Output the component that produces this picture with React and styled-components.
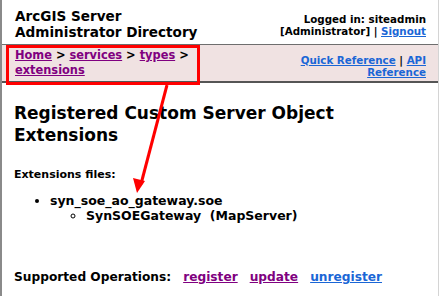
import React from "react";
import styled, { createGlobalStyle } from "styled-components";

const Global = createGlobalStyle`
  html, body { margin: 0; padding: 0; background: #fff; }
  body { font-family: "DejaVu Sans", Verdana, sans-serif; font-weight: bold; color: #000; }
`;

const Page = styled.div`
  position: relative;
  width: 439px;
  height: 296px;
  box-sizing: border-box;
  border-left: 2px solid #8a8a8a;
  border-right: 1px solid #d4d4d4;
  overflow: hidden;
`;

const Header = styled.div`
  display: flex;
  justify-content: space-between;
  height: 45px;
  box-sizing: border-box;
  padding: 8px 12px 0 13px;
  border-bottom: 1px solid #6e6e6e;
`;

const Title = styled.div`
  font-size: 13.6px;
  line-height: 16px;
`;

const UserBox = styled.div`
  font-size: 10.3px;
  line-height: 12px;
  text-align: right;
  padding-top: 5px;
`;

const Crumbs = styled.div`
  display: flex;
  justify-content: space-between;
  align-items: flex-end;
  height: 38px;
  box-sizing: border-box;
  padding: 3px 12px 3px 13px;
  background: #f0e2e2;
  border-bottom: 2px solid #555;
`;

const CrumbPath = styled.div`
  font-size: 11.4px;
  line-height: 15px;
  align-self: flex-start;
`;

const RefBox = styled.div`
  font-size: 10.3px;
  line-height: 12px;
  text-align: right;
`;

const Link = styled.a`
  color: ${(p) => (p.$visited ? "#800080" : "#1a66d6")};
  text-decoration: underline;
`;

const Content = styled.div`
  padding: 19px 0 0 12px;
`;

const Heading = styled.h2`
  margin: 0;
  font-size: 17px;
  line-height: 22px;
`;

const Label = styled.div`
  margin-top: 22px;
  font-size: 11px;
  line-height: 14px;
`;

const List = styled.ul`
  margin: ${(p) => (p.$nested ? "0" : "11px 0 0")};
  padding-left: 36px;
  list-style: ${(p) => (p.$nested ? "circle" : "disc")};
  font-size: 12.5px;
  line-height: 15px;
`;

const Ops = styled.div`
  margin-top: 47px;
  font-size: 12.2px;
  line-height: 15px;
  display: flex;
  gap: 12px;
`;

const Mark = styled.div`
  position: absolute;
  left: 4px;
  top: 45px;
  width: 194px;
  height: 40px;
  box-sizing: border-box;
  border: 3px solid #f00;
  pointer-events: none;
`;

const Arrow = styled.svg`
  position: absolute;
  left: 0;
  top: 0;
  pointer-events: none;
`;

export default function App() {
  return (
    <>
      <Global />
      <Page>
        <Header>
          <Title>
            ArcGIS Server
            <br />
            Administrator Directory
          </Title>
          <UserBox>
            Logged in: siteadmin
            <br />
            [Administrator] | <Link href="#">Signout</Link>
          </UserBox>
        </Header>
        <Crumbs>
          <CrumbPath>
            <Link $visited href="#">Home</Link> &gt; <Link $visited href="#">services</Link> &gt;{" "}
            <Link $visited href="#">types</Link> &gt;
            <br />
            <Link $visited href="#">extensions</Link>
          </CrumbPath>
          <RefBox>
            <Link href="#">Quick Reference</Link> | <Link href="#">API</Link>
            <br />
            <Link href="#">Reference</Link>
          </RefBox>
        </Crumbs>
        <Content>
          <Heading>
            Registered Custom Server Object
            <br />
            Extensions
          </Heading>
          <Label>Extensions files:</Label>
          <List>
            <li>
              syn_soe_ao_gateway.soe
              <List $nested>
                <li>SynSOEGateway&nbsp;&nbsp;(MapServer)</li>
              </List>
            </li>
          </List>
          <Ops>
            <span>Supported Operations:</span>
            <Link $visited href="#">register</Link>
            <Link $visited href="#">update</Link>
            <Link href="#">unregister</Link>
          </Ops>
        </Content>
        <Mark />
        <Arrow width="439" height="296" viewBox="0 0 439 296">
          <line x1="165" y1="85" x2="139" y2="184" stroke="#f00" strokeWidth="3" />
          <polygon points="135,193 131,178 143,181" fill="#f00" />
        </Arrow>
      </Page>
    </>
  );
}
